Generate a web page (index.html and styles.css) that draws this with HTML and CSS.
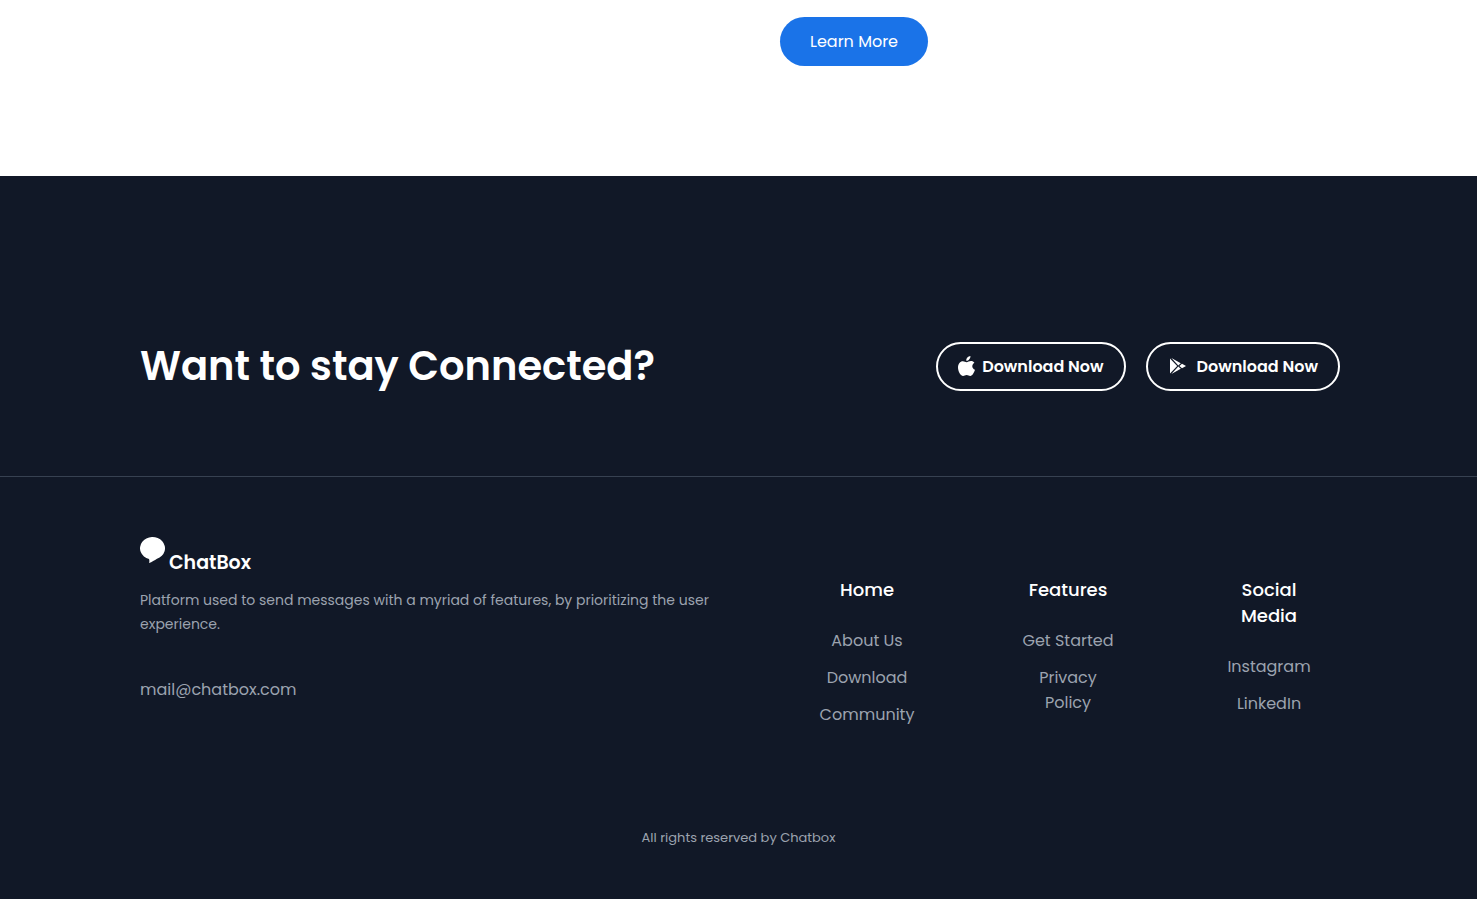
FILE: index.html
```html
<!DOCTYPE html>
<html lang="en">
<head>
<meta charset="utf-8">
<meta name="viewport" content="width=device-width, initial-scale=1">
<title>ChatBox</title>
<link rel="stylesheet" href="styles.css">
</head>
<body>
<main class="intro">
  <a class="learn-more" href="#features">Learn More</a>
</main>
<footer class="footer">
  <section class="cta">
    <h2 class="cta-title">Want to stay Connected?</h2>
    <div class="cta-actions">
      <button class="store-button" type="button">
        <svg class="apple-icon" viewBox="0 0 17 20" aria-hidden="true"><path d="M12.4 0C12.7 2.5 10.5 4.9 8.3 4.8C8 2.4 10.1.2 12.4 0ZM16.4 6.8C13.4 8.6 13.7 12.5 17 13.8C16.2 16.5 14.4 19.9 12.3 20C10.8 20 10.3 19.1 8.7 19.1C7 19.1 6.5 20 5.1 20C2.3 20 0 15 0 11.6C0 7.7 2.2 5.2 4.9 5.2C6.5 5.2 7.5 6.2 8.7 6.2C9.8 6.2 11 5.1 13 5.1C14.4 5.1 15.6 5.8 16.4 6.8Z"/></svg>
        Download Now
      </button>
      <button class="store-button store-button-play" type="button">
        <svg class="play-icon" viewBox="0 0 16 16" aria-hidden="true"><path d="M0 .5 7.2 8 0 15.5ZM1.4 0 10.8 5.3 8.3 7.4ZM8.3 8.6 10.8 10.7 1.4 16ZM12 5.8 16 8 12 10.2 9.4 8Z"/></svg>
        Download Now
      </button>
    </div>
  </section>
  <section class="links">
    <div class="brand">
      <a class="logo" href="#home">
        <svg class="logo-icon" viewBox="0 0 25 26" aria-hidden="true"><path d="M9 22A12.5 11.2 0 1 1 17 21.7C14.5 23.3 12 25 9 26C9.5 24.6 9.5 23.2 9 22Z"/></svg>
        <span class="logo-name">ChatBox</span>
      </a>
      <p class="tagline">Platform used to send messages with a myriad of features, by prioritizing the user experience.</p>
      <a class="mail" href="mailto:mail@chatbox.com">mail@chatbox.com</a>
    </div>
    <nav class="column" aria-labelledby="col-home">
      <h3 class="column-title" id="col-home">Home</h3>
      <a class="column-link" href="#about">About Us</a>
      <a class="column-link" href="#download">Download</a>
      <a class="column-link" href="#community">Community</a>
    </nav>
    <nav class="column" aria-labelledby="col-features">
      <h3 class="column-title" id="col-features">Features</h3>
      <a class="column-link" href="#start">Get Started</a>
      <a class="column-link" href="#privacy">Privacy Policy</a>
    </nav>
    <nav class="column" aria-labelledby="col-social">
      <h3 class="column-title" id="col-social">Social Media</h3>
      <a class="column-link" href="#instagram">Instagram</a>
      <a class="column-link" href="#linkedin">LinkedIn</a>
    </nav>
  </section>
  <p class="copyright">All rights reserved by Chatbox</p>
</footer>
</body>
</html>
```

FILE: styles.css
```css
* {
  box-sizing: border-box;
}

body {
  margin: 0;
  background: #fff;
  color: #fff;
  font-family: Poppins, Inter, sans-serif;
  font-size: 16px;
  line-height: 25px;
}

h2,
h3,
p {
  margin: 0;
}

a {
  color: inherit;
  text-decoration: none;
}

.intro {
  display: flex;
  padding: 17px 0 110px 780px;
}

.learn-more {
  padding: 12px 30px;
  border-radius: 25px;
  background: #1a73e8;
}

.footer {
  background: #111827;
  padding-bottom: 49px;
}

.cta {
  display: flex;
  align-items: center;
  justify-content: space-between;
  padding: 160px 137px 80px 140px;
  border-bottom: 1px solid #374151;
}

.cta-title {
  font-size: 40px;
  font-weight: 600;
  line-height: 60px;
}

.cta-actions {
  display: flex;
  gap: 20px;
}

.store-button {
  display: flex;
  align-items: center;
  gap: 7px;
  padding: 10px 20px;
  border: 2px solid #fff;
  border-radius: 25px;
  background: transparent;
  color: #fff;
  font: inherit;
  font-weight: 600;
  cursor: pointer;
}

.store-button-play {
  gap: 11px;
  padding-left: 22px;
}

.apple-icon {
  width: 17px;
  height: 20px;
  fill: #fff;
}

.play-icon {
  width: 16px;
  height: 16px;
  fill: #fff;
}

.links {
  display: grid;
  grid-template-columns: minmax(0, 1fr) repeat(3, 142px);
  gap: 59px;
  padding: 60px 137px 0 140px;
}

.logo {
  display: flex;
  align-items: flex-start;
  gap: 4px;
}

.logo-icon {
  width: 25px;
  height: 26px;
  fill: #fff;
}

.logo-name {
  padding-top: 13px;
  font-size: 19px;
  font-weight: 600;
}

.tagline {
  margin-top: 13px;
  color: #9ca3af;
  font-size: 14px;
  line-height: 24px;
}

.mail {
  display: inline-block;
  margin-top: 41px;
  color: #9ca3af;
}

.column {
  display: flex;
  flex-direction: column;
  gap: 12px;
  padding: 40px 20px 0;
  text-align: center;
}

.column-title {
  margin-bottom: 13px;
  font-size: 18px;
  font-weight: 500;
  line-height: 26px;
}

.column-link {
  color: #9ca3af;
}

.copyright {
  margin-top: 98px;
  color: #9ca3af;
  font-size: 13px;
  text-align: center;
}
```
